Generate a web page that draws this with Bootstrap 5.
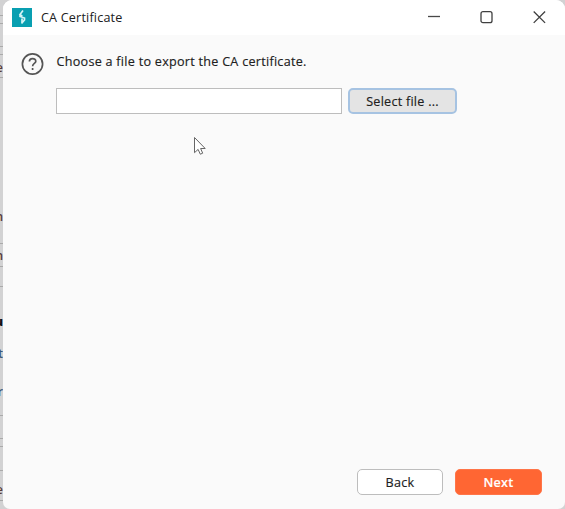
<!DOCTYPE html>
<html lang="en">
<head>
<meta charset="utf-8">
<title>CA Certificate</title>
<link href="https://cdn.jsdelivr.net/npm/bootstrap@5.3.0/dist/css/bootstrap.min.css" rel="stylesheet">
<style>
body{width:565px;height:509px;background:#d2d2d3;font-family:"Open Sans","Noto Sans",sans-serif;font-size:12.6px;line-height:18px;color:#202020}
.desktop{width:565px;height:509px}
.behind{width:3px;font-size:12px;font-weight:600;color:#593c38}
.behind span{position:absolute;right:0;line-height:14px}
.behind .dark{color:#111;font-weight:800}
.behind .blue{color:#3d5878}
.behind hr{position:absolute;left:0;width:3px;margin:0;border-color:#aaa;opacity:1}
.window{background:#fafafa;border-radius:9px 9px 7px 7px}
.titlebar{height:35px;background:#fff;padding-left:9px}
.caption{margin-left:9px;letter-spacing:.18px}
.ctl{width:52.5px}
.content-pane{padding:18px 23px 14px 18px}
.prompt{font-weight:500;-webkit-text-stroke:.15px #202020;white-space:nowrap;letter-spacing:.27px;position:relative;left:.5px}
.fields{margin-top:17px;gap:6px}
.file-input{width:286px;height:26px;border:1px solid #bdbdbd;border-radius:0;background:#fff}
.prompt-body{margin-left:11px}
.help-icon{margin-top:-1px}
.act{height:26px;padding:1px 0 0;font-size:12.6px;line-height:22px;border-radius:5px;font-weight:500;color:#202020;-webkit-text-stroke:.15px currentColor;letter-spacing:.25px}
.pick{width:109px;background:#e4e4e4;border:2px solid #a6c3e2}
.back{width:86px;background:#fff;border:1px solid #bdbdbd}
.next{width:87px;background:#ff6633;border:1px solid #ff7548;color:#fff;font-weight:600}
.footer-actions{gap:12px}
.pointer{left:191px;top:136px}
</style>
</head>
<body class="m-0 overflow-hidden">
<div class="desktop d-flex position-relative">
  <div class="behind position-relative overflow-hidden flex-shrink-0" aria-hidden="true">
    <hr style="top:15px"><hr style="top:23px"><hr style="top:46px"><hr style="top:54px"><span style="top:61px">e</span><hr style="top:77px">
    <span style="top:210px">n</span><hr style="top:243px"><span style="top:249px">n</span><hr style="top:266px"><hr style="top:286px"><span class="dark" style="top:315px">u</span><span class="blue" style="top:347px">t</span><span class="blue" style="top:385px">r</span><hr style="top:415px"><hr style="top:438px"><hr style="top:446px"><hr style="top:470px"><span style="top:483px">e</span><hr style="top:500px">
  </div>
  <main class="window flex-grow-1 d-flex flex-column overflow-hidden">
    <header class="titlebar d-flex align-items-center flex-shrink-0">
      <svg width="20" height="20" viewBox="0 0 20 20"><rect y="-1" width="20" height="20" fill="#099fb1"/><path d="M11 2.5L8 6.5l2.3 1.7M8 6.5v2l4.5 1.5v2L9.5 15.5M10 10.5v4" fill="none" stroke="#d5f3f5" stroke-width="1.7"/></svg>
      <span class="caption">CA Certificate</span>
      <div class="ms-auto d-flex">
        <span class="ctl text-center"><svg width="14" height="14" viewBox="0 0 14 14" fill="none" stroke="#484848" stroke-width="1.3"><path d="M1 5.5h12"/></svg></span>
        <span class="ctl text-center"><svg width="14" height="14" viewBox="0 0 14 14" fill="none" stroke="#404040" stroke-width="1.3"><rect x="2" y=".7" width="11" height="11" rx="2"/></svg></span>
        <span class="ctl text-center"><svg width="14" height="14" viewBox="0 0 14 14" fill="none" stroke="#404040" stroke-width="1.3"><path d="M1.7.5l11.4 11.4M13.1.5L1.7 11.9"/></svg></span>
      </div>
    </header>
    <section class="content-pane flex-grow-1 d-flex flex-column">
      <div class="d-flex">
        <svg class="help-icon flex-shrink-0" width="24" height="24" viewBox="0 0 24 24" fill="none" stroke="#555" stroke-width="1.7"><circle cx="11.5" cy="12" r="10.1"/><path d="M8.4 9.5c0-4 6.4-3.8 6.4-.3 0 2.2-3.2 2.2-3.2 5M11.6 16v2"/></svg>
        <div class="prompt-body">
          <div class="prompt">Choose a file to export the CA certificate.</div>
          <div class="d-flex fields">
            <input class="file-input form-control p-0" aria-label="File">
            <button class="btn act pick flex-shrink-0">Select file ...</button>
          </div>
        </div>
      </div>
      <footer class="footer-actions mt-auto d-flex justify-content-end">
        <button class="btn act back">Back</button>
        <button class="btn act next">Next</button>
      </footer>
    </section>
  </main>
  <svg class="pointer position-absolute" width="16" height="22" viewBox="0 0 16 22"><path d="M3.5 1.5v15.2l3.6-3.3 2.2 4.8 2.4-1-2.1-4.7h4.6z" fill="#fff" stroke="#666" stroke-width="1"/></svg>
</div>
<script src="https://cdn.jsdelivr.net/npm/bootstrap@5.3.0/dist/js/bootstrap.bundle.min.js"></script>
</body>
</html>
